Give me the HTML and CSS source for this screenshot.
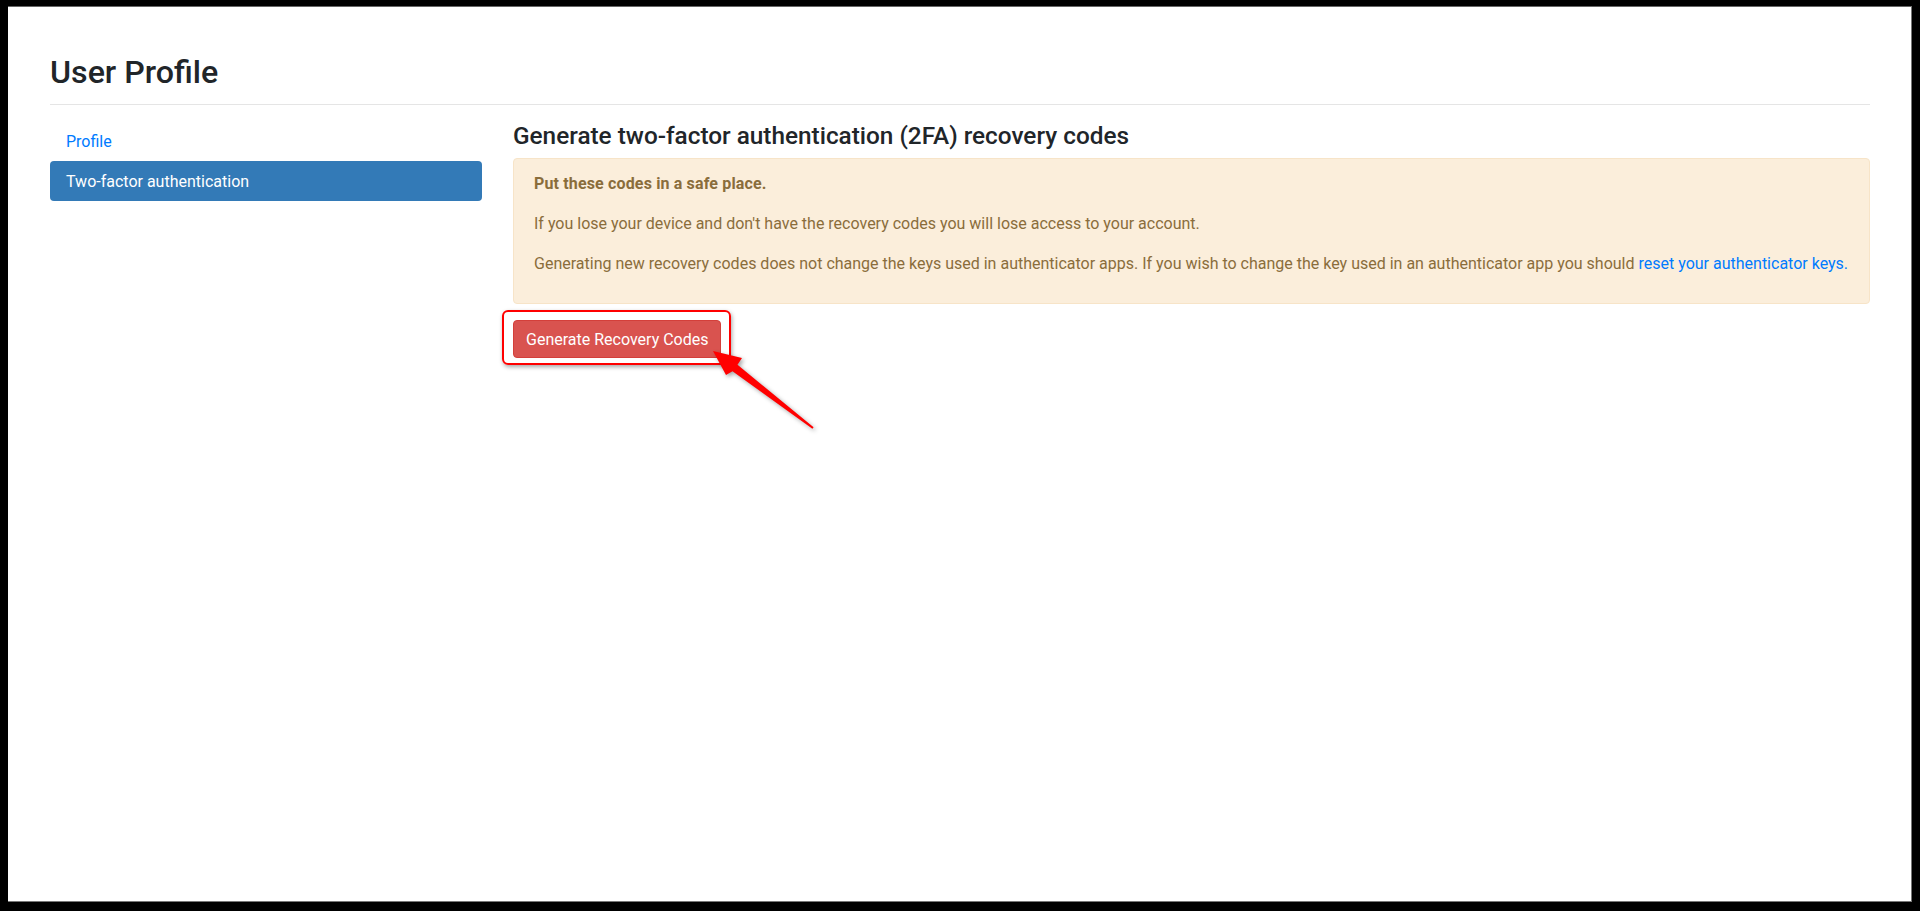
FILE: index.html
```html
<!DOCTYPE html>
<html lang="en">
<head>
<meta charset="utf-8">
<title>User Profile</title>
<link rel="stylesheet" href="styles.css">
</head>
<body>
<div class="frame">
  <div class="container">
    <h2 class="page-title">User Profile</h2>
    <hr class="rule">
    <div class="layout">
      <nav class="side-nav">
        <a class="nav-link" href="#">Profile</a>
        <a class="nav-link active" href="#">Two-factor authentication</a>
      </nav>
      <main class="content">
        <h4 class="section-title">Generate two-factor authentication (2FA) recovery codes</h4>
        <div class="alert">
          <p><strong>Put these codes in a safe place.</strong></p>
          <p>If you lose your device and don't have the recovery codes you will lose access to your account.</p>
          <p>Generating new recovery codes does not change the keys used in authenticator apps. If you wish to change the key used in an authenticator app you should <a class="alert-link" href="#">reset your authenticator keys.</a></p>
        </div>
        <div class="actions">
          <button class="btn-danger" type="button">Generate Recovery Codes</button>
          <span class="callout-box"></span>
          <svg class="callout-arrow" width="320" height="120" viewBox="0 0 320 120">
            <polygon points="200,31 229,38 224.5,44.8 300.6,107.2 299.4,108.8 219.5,51.2 213,55" fill="#ff0000"/>
          </svg>
        </div>
      </main>
    </div>
  </div>
</div>
</body>
</html>
```
FILE: styles.css
```css
html, body {
  margin: 0;
  padding: 0;
}
body {
  background: #000;
  font-family: Roboto, "Liberation Sans", sans-serif;
  font-size: 16px;
  line-height: 24px;
  color: #212529;
}
.frame {
  margin: 6px 8px 0 8px;
  width: 1904px;
  height: 896px;
  box-sizing: border-box;
  background: #fff;
  border-top: 1px solid #666;
  border-right: 1px solid #777;
  border-bottom: 1px solid #777;
}
.container {
  position: relative;
  padding: 0 41px 0 42px;
}
.page-title {
  margin: 0;
  padding-top: 46px;
  font-size: 32.2px;
  line-height: 38px;
  font-weight: 500;
  color: #212529;
}
.rule {
  margin: 13px 0 0 0;
  border: 0;
  border-top: 1px solid rgba(0, 0, 0, 0.1);
  height: 0;
}
.layout {
  display: grid;
  grid-template-columns: 432px 1fr;
  column-gap: 31px;
  margin-top: 16px;
}
.side-nav {
  display: flex;
  flex-direction: column;
}
.nav-link {
  display: block;
  padding: 9px 16px 7px;
  border-radius: 4px;
  color: #007bff;
  text-decoration: none;
}
.nav-link.active {
  background: #337ab7;
  color: #fff;
}
.section-title {
  margin: 0 0 8px 0;
  padding-top: 1px;
  font-size: 24.35px;
  line-height: 28px;
  font-weight: 500;
  color: #212529;
}
.alert {
  border: 1px solid #f7e4c8;
  border-radius: 4px;
  background: #fbeedb;
  color: #8a6d3b;
  padding: 13px 20px 11px;
  margin-bottom: 16px;
}
.alert p {
  margin: 0 0 16px 0;
}
.alert strong {
  font-weight: 700;
  letter-spacing: 0.15px;
}
.alert-link {
  color: #007bff;
  text-decoration: none;
}
.actions {
  position: relative;
  height: 38px;
}
.btn-danger {
  display: inline-block;
  font-family: inherit;
  font-size: inherit;
  line-height: 24px;
  padding: 7px 12px 5px;
  border: 1px solid #d43f3a;
  border-radius: 4px;
  background: #d9534f;
  color: #fff;
  cursor: pointer;
}
.callout-box {
  position: absolute;
  left: -11px;
  top: -10px;
  width: 229px;
  height: 55px;
  box-sizing: border-box;
  border: 2px solid #ff0000;
  border-radius: 6px;
  box-shadow: 1px 2px 4px rgba(0, 0, 0, 0.35);
  pointer-events: none;
}
.callout-arrow {
  position: absolute;
  left: 0;
  top: 0;
  overflow: visible;
  filter: drop-shadow(2px 2px 2px rgba(0, 0, 0, 0.35));
  pointer-events: none;
}
```
